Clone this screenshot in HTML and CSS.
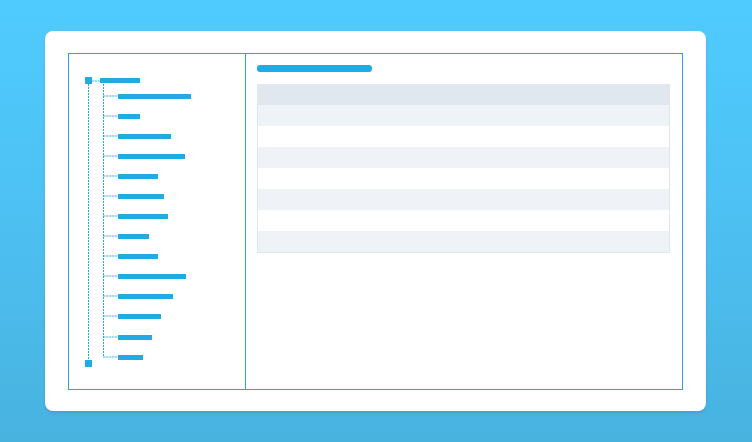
FILE: index.html
```html
<!DOCTYPE html>
<html>
<head>
<meta charset="utf-8">
<link rel="stylesheet" href="styles.css">
</head>
<body>
<div class="card">
  <div class="frame">
    <div class="tree-pane">
      <div class="tree">
        <div class="root-row">
          <span class="node"></span>
          <span class="link root-link"></span>
          <span class="bar" style="width:40px"></span>
        </div>
        <div class="children">
          <div class="child"><span class="link"></span><span class="bar" style="width:73px"></span></div>
          <div class="child"><span class="link"></span><span class="bar" style="width:22px"></span></div>
          <div class="child"><span class="link"></span><span class="bar" style="width:53px"></span></div>
          <div class="child"><span class="link"></span><span class="bar" style="width:67px"></span></div>
          <div class="child"><span class="link"></span><span class="bar" style="width:40px"></span></div>
          <div class="child"><span class="link"></span><span class="bar" style="width:46px"></span></div>
          <div class="child"><span class="link"></span><span class="bar" style="width:50px"></span></div>
          <div class="child"><span class="link"></span><span class="bar" style="width:31px"></span></div>
          <div class="child"><span class="link"></span><span class="bar" style="width:40px"></span></div>
          <div class="child"><span class="link"></span><span class="bar" style="width:68px"></span></div>
          <div class="child"><span class="link"></span><span class="bar" style="width:55px"></span></div>
          <div class="child"><span class="link"></span><span class="bar" style="width:43px"></span></div>
          <div class="child"><span class="link"></span><span class="bar" style="width:34px"></span></div>
          <div class="child"><span class="link"></span><span class="bar" style="width:25px"></span></div>
        </div>
        <span class="node end-node"></span>
      </div>
    </div>
    <div class="content-pane">
      <div class="title-bar"></div>
      <div class="table">
        <div class="thead"></div>
        <div class="trow stripe"></div>
        <div class="trow"></div>
        <div class="trow stripe"></div>
        <div class="trow"></div>
        <div class="trow stripe"></div>
        <div class="trow"></div>
        <div class="trow stripe"></div>
      </div>
    </div>
  </div>
</div>
</body>
</html>
```

FILE: styles.css
```css
html, body {
  margin: 0;
  padding: 0;
  height: 100%;
}
body {
  background: linear-gradient(180deg, #50cbfe 0%, #4cbff0 55%, #48b2df 100%);
  padding: 31px 46px 31px 45px;
  box-sizing: border-box;
  font-family: "Liberation Sans", Arial, sans-serif;
}
.card {
  width: 661px;
  height: 380px;
  background: #ffffff;
  border-radius: 8px;
  box-shadow: 0 2px 3px rgba(0, 40, 80, 0.12);
  padding: 22px 23px 21px 23px;
  box-sizing: border-box;
}
.frame {
  display: flex;
  height: 337px;
  border: 1px solid #2aa5dc;
  box-sizing: border-box;
}
.tree-pane {
  width: 176px;
  border-right: 1px solid #2aa5dc;
  flex: none;
}
.tree {
  position: relative;
  padding: 23px 0 0 16px;
}
.tree::before {
  content: "";
  position: absolute;
  left: 19px;
  top: 30px;
  width: 1px;
  height: 276px;
  background: repeating-linear-gradient(180deg, #22aae2 0 2px, transparent 2px 3px);
}
.tree::after {
  content: "";
  position: absolute;
  left: 34px;
  top: 30px;
  width: 1px;
  height: 273px;
  background: repeating-linear-gradient(180deg, #22aae2 0 2px, transparent 2px 3px);
}
.root-row {
  display: flex;
  align-items: center;
  height: 7px;
}
.node {
  display: block;
  width: 7px;
  height: 7px;
  background: #22aae2;
  flex: none;
}
.link {
  display: block;
  height: 2px;
  width: 15px;
  flex: none;
  background: repeating-linear-gradient(90deg, #a6dbf4 0 2px, #d4eefa 2px 3px);
}
.root-link {
  width: 8px;
}
.bar {
  display: block;
  height: 5px;
  background: #22aae2;
  flex: none;
}
.root-row .bar {
  margin-top: -1px;
}
.children {
  margin-top: 2px;
  margin-left: 18px;
}
.child {
  display: flex;
  align-items: flex-start;
  height: 20px;
}
.child:nth-child(13) {
  margin-top: 1px;
}
.child .link {
  margin-top: 9px;
}
.child .bar {
  margin-top: 8px;
}
.end-node {
  margin-top: -7px;
}
.content-pane {
  flex: 1;
  padding: 11px 12px 0 11px;
}
.title-bar {
  width: 115px;
  height: 7px;
  border-radius: 3px;
  background: #22aae2;
}
.table {
  margin-top: 12px;
  border: 1px solid #e0e6ee;
  border-top: none;
}
.thead {
  height: 21px;
  background: #e0e7ef;
}
.trow {
  height: 21px;
  background: #ffffff;
}
.trow.stripe {
  background: #eff3f8;
}
```
